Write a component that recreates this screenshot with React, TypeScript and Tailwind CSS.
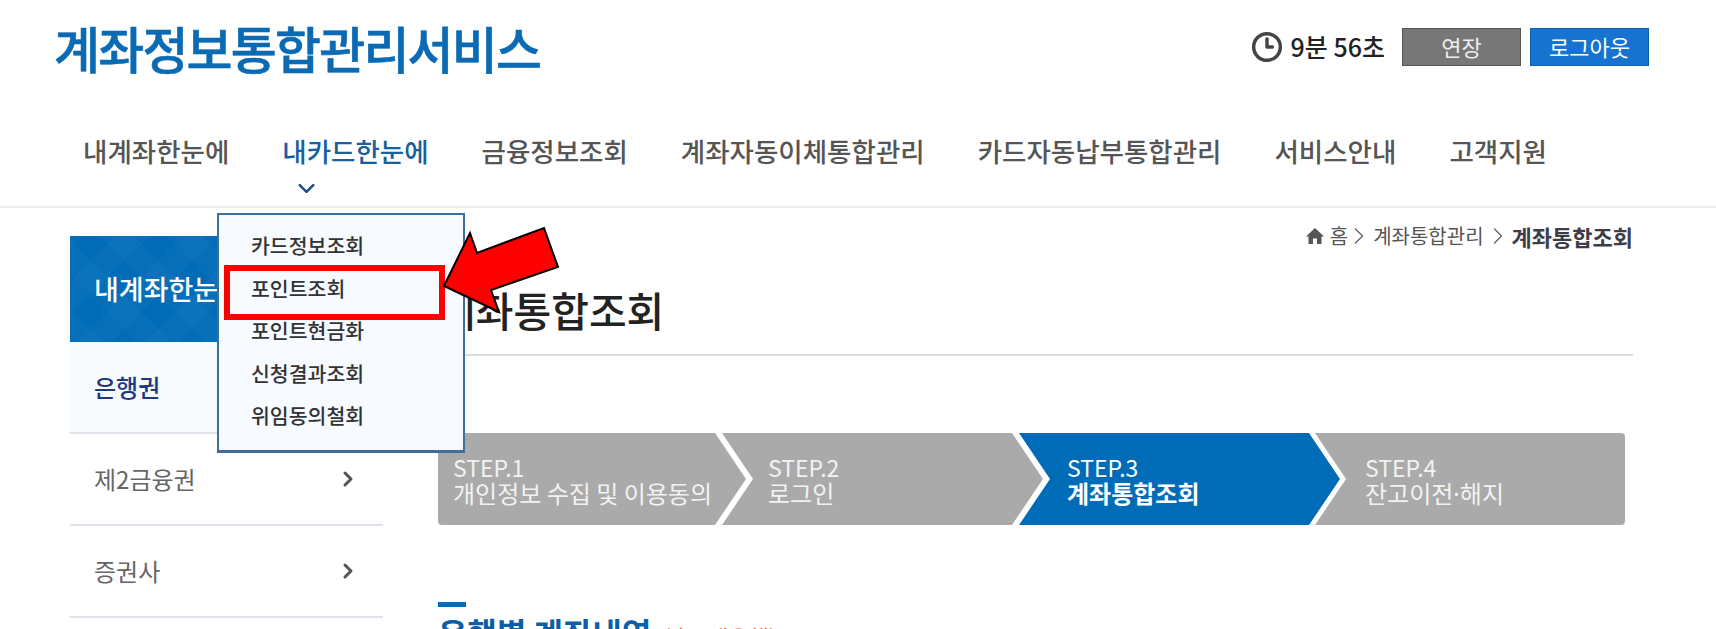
import { ChevronDown, ChevronRight, Clock3 } from "lucide-react";

const NAV_ITEMS = [
  { label: "내계좌한눈에" },
  { label: "내카드한눈에", active: true },
  { label: "금융정보조회" },
  { label: "계좌자동이체통합관리" },
  { label: "카드자동납부통합관리" },
  { label: "서비스안내" },
  { label: "고객지원" },
];

const SUB_MENU = ["카드정보조회", "포인트조회", "포인트현금화", "신청결과조회", "위임동의철회"];

export default function App() {
  return (
    <div className="relative h-[629px] w-[1716px] overflow-hidden bg-white font-['Noto_Sans_CJK_KR','Noto_Sans',sans-serif] text-[#333]">
      <header className="h-[208px] border-b-2 border-[#eeeeee]">
        <div className="flex h-[94px] items-center justify-between pl-[54px] pr-[67px]">
          <h1 className="mt-[-1px] text-[50px] leading-none font-medium tracking-[-1.8px] text-[#0a6ab4] [-webkit-text-stroke:0.6px_#0a6ab4]">계좌정보통합관리서비스</h1>
          <div className="flex items-center">
            <Clock3 className="mr-[8px] h-[32px] w-[32px] text-[#444]" strokeWidth={2.6} />
            <span className="mr-[17px] text-[25px] font-medium text-[#222]">9분 56초</span>
            <button className="mr-[9px] h-[38px] w-[119px] border border-[#555] bg-[#777] pb-[2px] text-[22px] leading-none text-[#eee]">연장</button>
            <button className="h-[38px] w-[119px] border border-[#0e62ad] bg-[#1673cf] pb-[2px] text-[22px] leading-none text-white">로그아웃</button>
          </div>
        </div>
        <nav className="flex gap-[53px] pl-[83px] pt-[38px]">
          {NAV_ITEMS.map((item) => (
            <div key={item.label} className="relative">
              <span className={`text-[26.5px] leading-[38px] font-medium ${item.active ? "text-[#17609f]" : "text-[#555]"}`}>
                {item.label}
              </span>
              {item.active && (
                <ChevronDown className="absolute left-[11px] top-[43px] h-[27px] w-[27px] text-[#17508a]" strokeWidth={2.2} />
              )}
            </div>
          ))}
        </nav>
      </header>

      <div className="flex pl-[70px]">
        <aside className="mt-[28px] w-[313px] shrink-0">
          <div className="flex h-[106px] items-center bg-[#006cb7] bg-[repeating-linear-gradient(45deg,rgba(255,255,255,0.025)_0_24px,transparent_24px_48px),repeating-linear-gradient(-45deg,rgba(255,255,255,0.025)_0_24px,transparent_24px_48px)] pl-[24px] text-[27px] font-medium text-white">
            내계좌한눈에
          </div>
          <div className="flex h-[92px] items-center border-b-2 border-[#dde3e8] bg-[#f7fafd] pl-[24px] text-[24px] font-medium text-[#1f3a7c]">은행권</div>
          {["제2금융권", "증권사"].map((label) => (
            <div key={label} className="flex h-[92px] items-center justify-between border-b-2 border-[#dde3e8] pl-[24px] pr-[23px] text-[24px] text-[#666]">
              {label}
              <ChevronRight className="h-[24px] w-[24px] text-[#555]" strokeWidth={3} />
            </div>
          ))}
        </aside>

        <main className="ml-[55px] w-[1195px] shrink-0">
          <div className="flex h-[56px] items-center justify-end text-[20px] leading-none text-[#555]">
            <svg className="mr-[6px] h-[18px] w-[18px] fill-[#555]" viewBox="0 0 18 18">
              <path d="M9 1 L18 9.5 L15.5 9.5 L15.5 17 L11 17 L11 11.5 L7 11.5 L7 17 L2.500 17 L2.500 9.500 L0 9.500 Z" />
            </svg>
            <span>홈</span>
            <ChevronRight className="ml-[-3px] h-[28px] w-[28px] text-[#666]" strokeWidth={1.2} />
            <span>계좌통합관리</span>
            <ChevronRight className="h-[28px] w-[28px] text-[#666]" strokeWidth={1.2} />
            <b className="text-[22px] font-bold text-[#3d3d4a]">계좌통합조회</b>
          </div>
          <h2 className="flex h-[92px] items-center border-b-2 border-[#dddddd] text-[41px] leading-none font-medium text-[#222]">계좌통합조회</h2>

          <ol className="mt-[77px] flex h-[92px] text-[24px] leading-[25px] text-[#f2f2f2]">
            <li className="flex w-[308px] flex-col justify-center rounded-l-[4px] bg-[#aaaaaa] pl-[15px] pt-[1px] [clip-path:polygon(0_0,calc(100%-31px)_0,100%_50%,calc(100%-31px)_100%,0_100%)]">
              <span className="text-[23px]">STEP.1</span>
              <span className="whitespace-nowrap">개인정보 수집 및 이용동의</span>
            </li>
            <li className="ml-[-24px] flex w-[321px] flex-col justify-center bg-[#aaaaaa] pl-[46px] pt-[1px] [clip-path:polygon(0_0,calc(100%-31px)_0,100%_50%,calc(100%-31px)_100%,0_100%,31px_50%)]">
              <span className="text-[23px]">STEP.2</span>
              <span>로그인</span>
            </li>
            <li className="ml-[-24px] flex w-[321px] flex-col justify-center bg-[#006cb7] pl-[48px] pt-[1px] text-white [clip-path:polygon(0_0,calc(100%-31px)_0,100%_50%,calc(100%-31px)_100%,0_100%,31px_50%)]">
              <span className="text-[23px]">STEP.3</span>
              <span className="font-bold">계좌통합조회</span>
            </li>
            <li className="ml-[-25px] flex w-[310px] flex-col justify-center rounded-r-[4px] bg-[#aaaaaa] pl-[50px] pt-[1px] [clip-path:polygon(0_0,100%_0,100%_100%,0_100%,31px_50%)]">
              <span className="text-[23px]">STEP.4</span>
              <span>
                잔고이전<span className="mx-[-3.5px]">·</span>해지
              </span>
            </li>
          </ol>

          <div className="mt-[77px] h-[5px] w-[28px] bg-[#006cb7]" />
          <div className="mt-[5px] flex items-baseline gap-[12px] whitespace-nowrap">
            <h3 className="text-[32px] leading-[40px] font-bold text-[#0a5fa8]">은행별 계좌내역</h3>
            <span className="text-[22px] text-[#f0561d]">(총 1개은행)</span>
          </div>
        </main>
      </div>

      {/* dropdown over the sidebar */}
      <div className="absolute left-[217px] top-[213px] flex h-[240px] w-[248px] flex-col gap-[17.5px] border-2 border-b-[3px] border-[#3f6f99] bg-[#f7faff] pl-[32px] pt-[18px] text-[20.5px] leading-[25px] font-medium text-[#333]">
        {SUB_MENU.map((label) => (
          <div key={label}>{label}</div>
        ))}
      </div>

      {/* annotation added on top of the screenshot */}
      <div className="absolute left-[224px] top-[265px] h-[55px] w-[221px] border-[6px] border-[#ff0000]" />
      <svg className="absolute left-[440px] top-[222px]" width="124" height="96" viewBox="440 222 124 96">
        <polygon points="444,286 470,233 477,253 544,228 558,267 491,290 499,312" fill="#ff0000" stroke="#000" strokeWidth="2" />
      </svg>
    </div>
  );
}
